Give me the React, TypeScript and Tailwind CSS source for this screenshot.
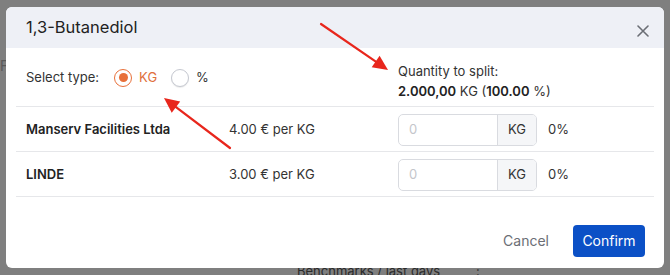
import React from "react";

function Arrow({ x1, y1, x2, y2 }: { x1: number; y1: number; x2: number; y2: number }) {
  const dx = x2 - x1;
  const dy = y2 - y1;
  const len = Math.sqrt(dx * dx + dy * dy);
  const ux = dx / len;
  const uy = dy / len;
  const hl = 15;
  const hw = 7;
  const bx = x2 - ux * hl;
  const by = y2 - uy * hl;
  const p1 = `${x2},${y2}`;
  const p2 = `${bx - uy * hw},${by + ux * hw}`;
  const p3 = `${bx + uy * hw},${by - ux * hw}`;
  return (
    <g>
      <line x1={x1} y1={y1} x2={bx + ux * 2} y2={by + uy * 2} stroke="#e8261c" strokeWidth={2.2} strokeLinecap="round" />
      <polygon points={`${p1} ${p2} ${p3}`} fill="#e8261c" />
    </g>
  );
}

function Row({ name, price }: { name: string; price: string }) {
  return (
    <div className="flex items-center h-[45px] border-b border-[#e6e7ea] pl-[10px] pt-[1px]">
      <div className="w-[203px] font-semibold text-[#222] pt-[1px]">{name}</div>
      <div className="w-[169px] text-[#333] pt-[1px]">{price}</div>
      <div className="flex items-center h-[32px] w-[139px] border border-[#d9dbe0] rounded-[5px] overflow-hidden">
        <div className="flex-1 pl-[10px] text-[#c4c6cb]">0</div>
        <div className="w-[39px] h-full flex items-center justify-center bg-[#f5f6f8] border-l border-[#d9dbe0] text-[#333]">KG</div>
      </div>
      <div className="ml-[11px] text-[#333]">0%</div>
    </div>
  );
}

export default function App() {
  return (
    <div
      className="relative w-[670px] h-[275px] overflow-hidden bg-[#7f7f7f] text-[13px]"
      style={{ fontFamily: "Inter, 'Noto Sans', sans-serif" }}
    >
      <div className="absolute left-[297px] top-[262px] text-[13px] text-[#2a2a2a]">Benchmarks / last days</div>
      <div className="absolute left-[476px] top-[262px] text-[13px] text-[#2a2a2a]">:</div>
      <div className="absolute left-[0px] top-[55px] text-[14px] text-[#5a5a5a]">F</div>

      <div className="relative ml-[6px] mt-[7px] w-[658px] h-[261px] bg-white rounded-[6px] overflow-hidden flex flex-col">
        <div className="h-[41px] bg-[#eef0f6] flex items-center justify-between pl-[20px] pr-[15px] shrink-0">
          <div className="text-[16.5px] text-[#222]">1,3-Butanediol</div>
          <svg width="12" height="12" viewBox="0 0 12 12" className="mt-[6px]">
            <path d="M1 1 L11 11 M11 1 L1 11" stroke="#6b6e75" strokeWidth="1.6" strokeLinecap="round" />
          </svg>
        </div>

        <div className="px-[10px] flex flex-col">
          <div className="flex items-center h-[59px] border-b border-[#e6e7ea] pl-[10px]">
            <div className="w-[372px] flex items-center mt-[1px]">
              <span className="text-[#333]">Select type:</span>
              <span className="ml-[15px] w-[18px] h-[18px] rounded-full border border-[#e8703a] flex items-center justify-center">
                <span className="w-[9px] h-[9px] rounded-full bg-[#e8703a]" />
              </span>
              <span className="ml-[7px] text-[#e0703d]">KG</span>
              <span className="ml-[14px] w-[18px] h-[18px] rounded-full border border-[#c5c8d0] bg-white shadow-[0_1px_1px_rgba(0,0,0,0.08)]" />
              <span className="ml-[7px] text-[#333]">%</span>
            </div>
            <div className="flex flex-col leading-[20px] text-[#333] mt-[7px]">
              <span>Quantity to split:</span>
              <span>
                <b className="font-semibold text-[#222]">2.000,00</b> KG (<b className="font-semibold text-[#222]">100.00</b> %)
              </span>
            </div>
          </div>
          <Row name="Manserv Facilities Ltda" price="4.00 € per KG" />
          <Row name="LINDE" price="3.00 € per KG" />
        </div>

        <div className="flex-1 flex items-center justify-end pr-[19px] pt-[16px]">
          <button className="text-[14px] text-[#6b6e75] mr-[24px]">Cancel</button>
          <button className="text-[14px] bg-[#0b50c6] text-white rounded-[4px] w-[72px] h-[32px]">Confirm</button>
        </div>
      </div>

      <svg className="absolute left-0 top-0" width="670" height="275">
        <Arrow x1={321} y1={24} x2={388} y2={70} />
        <Arrow x1={230} y1={148} x2={164} y2={98} />
      </svg>
    </div>
  );
}
